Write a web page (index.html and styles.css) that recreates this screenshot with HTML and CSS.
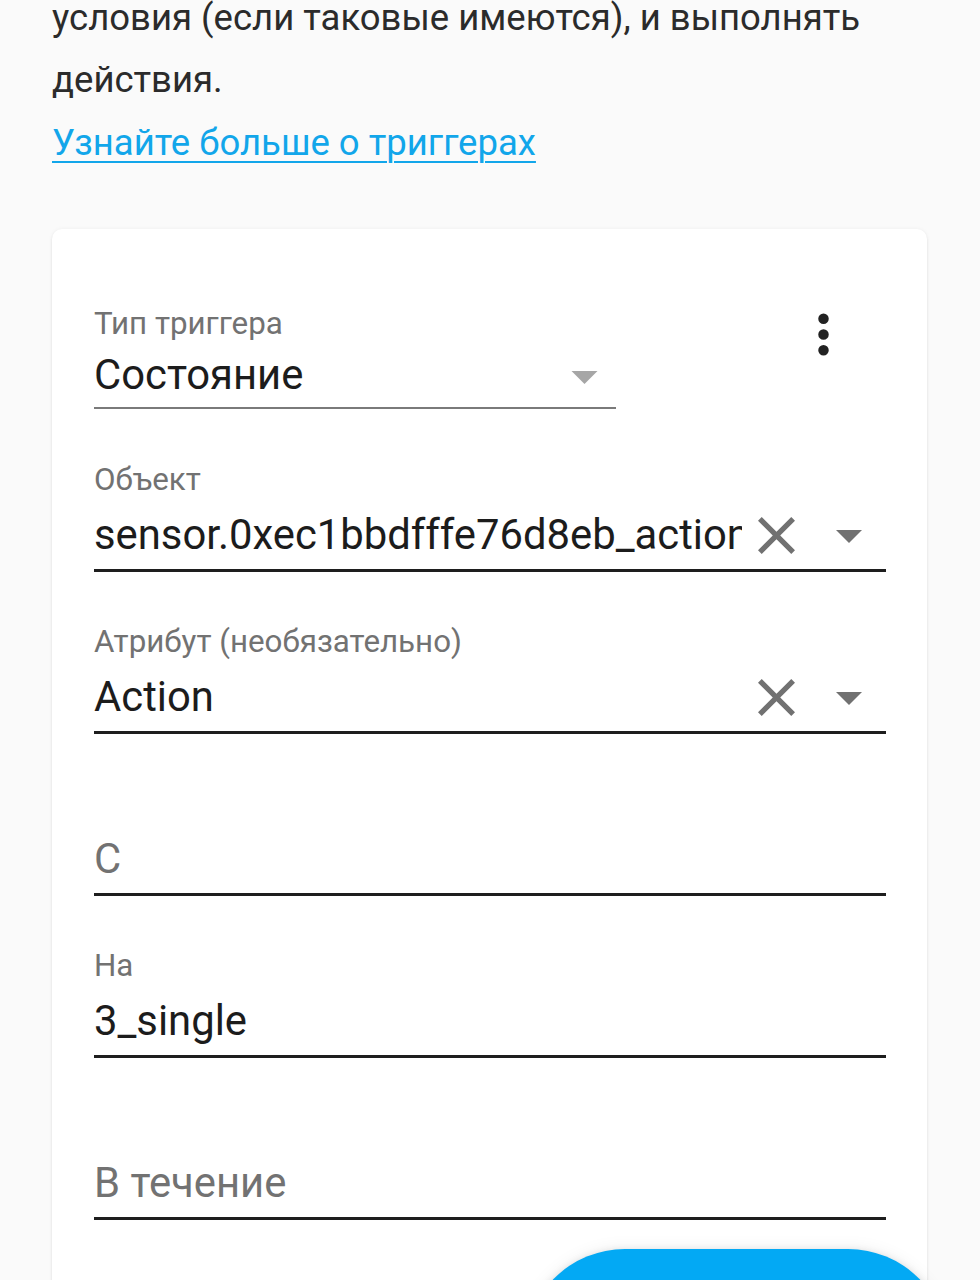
FILE: index.html
```html
<!DOCTYPE html>
<html lang="ru">
<head>
<meta charset="utf-8">
<title>Триггер</title>
<link rel="stylesheet" href="styles.css">
</head>
<body>
<main class="page">
  <p class="intro">условия (если таковые имеются), и выполнять действия.</p>
  <p class="more"><a class="link" href="#">Узнайте больше о триггерах</a></p>

  <section class="card">
    <div class="top-row">
      <div class="select">
        <div class="label">Тип триггера</div>
        <div class="control">
          <span class="value">Состояние</span>
          <svg class="select-arrow" viewBox="7 10 10 5" width="27" height="13"><path d="M7,10L12,15L17,10H7Z"/></svg>
        </div>
      </div>
      <button class="kebab" aria-label="Меню">
        <svg viewBox="0 0 24 24" width="63" height="63"><path d="M12,16A2,2 0 0,1 14,18A2,2 0 0,1 12,20A2,2 0 0,1 10,18A2,2 0 0,1 12,16M12,10A2,2 0 0,1 14,12A2,2 0 0,1 12,14A2,2 0 0,1 10,12A2,2 0 0,1 12,10M12,4A2,2 0 0,1 14,6A2,2 0 0,1 12,8A2,2 0 0,1 10,6A2,2 0 0,1 12,4Z"/></svg>
      </button>
    </div>

    <div class="field">
      <div class="label">Объект</div>
      <div class="control">
        <span class="value">sensor.0xec1bbdfffe76d8eb_action</span>
        <svg class="clear" viewBox="5 5 14 14" width="37" height="37"><path d="M19,6.41L17.59,5L12,10.59L6.41,5L5,6.41L10.59,12L5,17.59L6.41,19L12,13.41L17.59,19L19,17.59L13.41,12L19,6.41Z"/></svg>
        <svg class="drop" viewBox="7 10 10 5" width="26" height="13"><path d="M7,10L12,15L17,10H7Z"/></svg>
      </div>
    </div>

    <div class="field">
      <div class="label">Атрибут (необязательно)</div>
      <div class="control">
        <span class="value">Action</span>
        <svg class="clear" viewBox="5 5 14 14" width="37" height="37"><path d="M19,6.41L17.59,5L12,10.59L6.41,5L5,6.41L10.59,12L5,17.59L6.41,19L12,13.41L17.59,19L19,17.59L13.41,12L19,6.41Z"/></svg>
        <svg class="drop" viewBox="7 10 10 5" width="26" height="13"><path d="M7,10L12,15L17,10H7Z"/></svg>
      </div>
    </div>

    <div class="field">
      <div class="label">&nbsp;</div>
      <div class="control">
        <span class="value placeholder">С</span>
      </div>
    </div>

    <div class="field">
      <div class="label">На</div>
      <div class="control">
        <span class="value">3_single</span>
      </div>
    </div>

    <div class="field">
      <div class="label">&nbsp;</div>
      <div class="control">
        <span class="value placeholder">В течение</span>
      </div>
    </div>
  </section>
</main>
<button class="fab" aria-label="Сохранить"></button>
</body>
</html>
```

FILE: styles.css
```css
html, body {
  margin: 0;
  padding: 0;
}
body {
  background: #fafafa;
  font-family: Roboto, "Noto Sans", "Liberation Sans", sans-serif;
  color: #212121;
  overflow: hidden;
  height: 1280px;
  position: relative;
}
.page {
  padding: 0 53px 0 52px;
}
.intro {
  margin: -13px 0 0 0;
  font-size: 36.5px;
  line-height: 62px;
  color: #2b2b2b;
}
.more {
  margin: 1px 0 0 0;
  font-size: 36.5px;
  line-height: 62px;
}
.link {
  color: #12a6ea;
  text-decoration: underline;
  text-decoration-thickness: 2px;
  text-underline-offset: 6px;
}
.card {
  margin-top: 55px;
  background: #fff;
  border-radius: 10px;
  box-shadow: 0 2px 3px rgba(0,0,0,0.08), 0 0 4px rgba(0,0,0,0.05);
  padding: 0 41px 120px 42px;
}
.top-row {
  display: flex;
  justify-content: space-between;
  align-items: flex-start;
}
.select {
  width: 522px;
  padding-top: 78px;
  border-bottom: 2px solid #7a7a7a;
  padding-bottom: 6px;
}
.label {
  font-size: 31.3px;
  line-height: 34px;
  color: #727272;
  white-space: nowrap;
}
.control {
  display: flex;
  align-items: center;
  height: 52px;
}
.select .control {
  margin-top: 8px;
}
.value {
  flex: 1;
  min-width: 0;
  font-size: 41.8px;
  line-height: 52px;
  color: #1c1c1c;
  white-space: nowrap;
  overflow: hidden;
}
.placeholder {
  color: #727272;
}
.select-arrow {
  fill: #a6a6a6;
  margin-right: 18px;
  margin-top: 4px;
}
.kebab {
  margin-top: 42px;
  width: 126px;
  height: 126px;
  border: 0;
  padding: 0;
  background: none;
  display: flex;
  align-items: center;
  justify-content: center;
  fill: #222;
}
.field {
  margin-top: 54px;
  padding-bottom: 8px;
  border-bottom: 3px solid #1e1e1e;
}
.field + .field {
  margin-top: 53px;
}
.field .control {
  margin-top: 12px;
}
.clear {
  fill: #717171;
  margin-left: 16px;
}
.drop {
  fill: #717171;
  margin-left: 41px;
  margin-right: 24px;
  margin-top: 2px;
}
.fab {
  position: absolute;
  left: 525px;
  top: 1249px;
  width: 423px;
  height: 200px;
  border: 0;
  border-radius: 100px;
  background: #03a9f4;
  box-shadow: 0 3px 8px rgba(0,0,0,0.18), 0 1px 18px rgba(0,0,0,0.08);
}
```
